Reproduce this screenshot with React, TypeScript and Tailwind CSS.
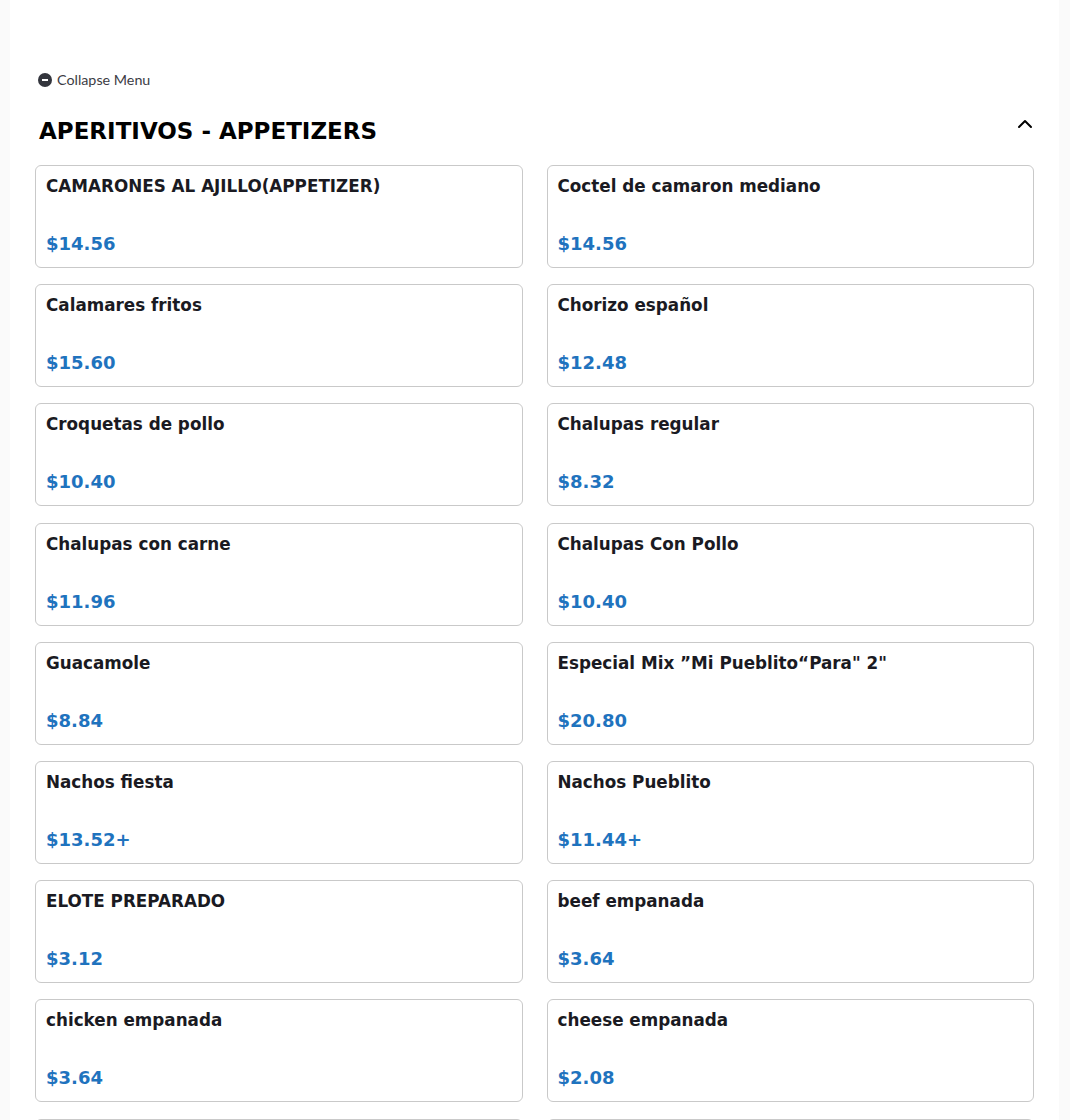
import React from 'react'
import { ChevronUp } from 'lucide-react'

const items = [
  ['CAMARONES AL AJILLO(APPETIZER)', '$14.56'],
  ['Coctel de camaron mediano', '$14.56'],
  ['Calamares fritos', '$15.60'],
  ['Chorizo español', '$12.48'],
  ['Croquetas de pollo', '$10.40'],
  ['Chalupas regular', '$8.32'],
  ['Chalupas con carne', '$11.96'],
  ['Chalupas Con Pollo', '$10.40'],
  ['Guacamole', '$8.84'],
  ['Especial Mix ”Mi Pueblito“Para" 2"', '$20.80'],
  ['Nachos fiesta', '$13.52+'],
  ['Nachos Pueblito', '$11.44+'],
  ['ELOTE PREPARADO', '$3.12'],
  ['beef empanada', '$3.64'],
  ['chicken empanada', '$3.64'],
  ['cheese empanada', '$2.08'],
  ['', ''],
  ['', ''],
]

const MenuCard = ({ title, price }: { title: string; price: string }) => (
  <div className="flex h-[103px] flex-col rounded-[6px] border border-[#c9c9c9] bg-white px-[10px] pt-[8px]">
    <h3 className="h-[24px] text-[16.8px] leading-[24px] font-bold text-[#1a1a22]">{title}</h3>
    <p className="mt-[31px] h-[29px] text-[18px] leading-[29px] font-bold text-[#1f73be]">{price}</p>
  </div>
)

export default function App() {
  return (
    <div className="h-[1120px] overflow-hidden bg-[#fafafa] px-[10px] font-['DejaVu_Sans',sans-serif]">
      <div className="h-full w-[1049px] bg-white pt-[71px] pr-[25px] pl-[25px]">
        <button className="ml-[3px] flex h-[18px] items-center gap-[5px] font-['Lato',sans-serif] text-[14.3px] text-[#3c3c44]">
          <span className="flex h-[14px] w-[14px] items-center justify-center rounded-full bg-[#33353d]">
            <span className="h-[2px] w-[6px] bg-white" />
          </span>
          Collapse Menu
        </button>
        <div className="mt-[19px] flex h-[38px] items-start justify-between pr-[1px] pl-[4px]">
          <h2 className="pt-[7px] text-[23px] leading-[32px] font-bold text-black">
            APERITIVOS - APPETIZERS
          </h2>
          <ChevronUp className="mt-[4px] -mr-[4px] h-[24px] w-[24px] text-black" strokeWidth={2} />
        </div>
        <div className="mt-[19px] grid grid-cols-2 gap-x-[24px] gap-y-[16.2px]">
          {items.map(([title, price], i) => (
            <MenuCard key={i} title={title} price={price} />
          ))}
        </div>
      </div>
    </div>
  )
}
